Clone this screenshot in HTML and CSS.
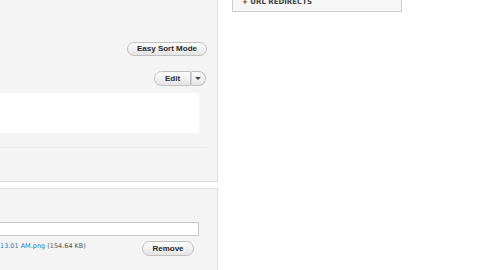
FILE: index.html
```html
<!DOCTYPE html>
<html lang="en">
<head>
    <meta charset="UTF-8">
    <meta name="viewport" content="width=device-width, initial-scale=1.0">
    <title>Edit content</title>
    <link rel="stylesheet" href="styles.css">
</head>
<body>

    <div class="page">
        <div class="main">

            <!-- Field collection panel -->
            <div class="panel panel-fields">
                <div class="toolbar">
                    <button class="btn btn-sort">Easy Sort Mode</button>
                </div>
                <div class="toolbar toolbar-edit">
                    <div class="split">
                        <button class="btn split-main">Edit</button>
                        <button class="btn split-arrow"><span class="caret"></span></button>
                    </div>
                </div>
                <div class="item-box"></div>
                <div class="divider"></div>
            </div>

            <!-- File upload panel -->
            <div class="panel panel-file">
                <input type="text" class="text-field">
                <div class="file-row">
                    <span class="file-name"><a href="#">13.01 AM.png</a> (154.64 KB)</span>
                    <button class="btn btn-remove">Remove</button>
                </div>
            </div>

        </div>

        <div class="sidebar">
            <div class="side-box">
                <span class="side-title">+ URL REDIRECTS</span>
            </div>
        </div>
    </div>

</body>
</html>
```

FILE: styles.css
```css
/* Page layout */
body {
    font-family: "Liberation Sans", Arial, sans-serif;
    background-color: #ffffff;
    margin: 0;
    padding: 0;
    overflow: hidden;
}
.page {
    display: flex;
    align-items: flex-start;
}
.main {
    width: 218px;
}
.sidebar {
    width: 170px;
    margin-left: 14px;
    margin-top: -19px;
}

/* Panels */
.panel {
    background-color: #f4f4f4;
    border-right: 1px solid #dcdcdc;
    box-sizing: border-box;
}
.panel-fields {
    height: 182px;
    border-bottom: 1px solid #dcdcdc;
}
.panel-file {
    margin-top: 6px;
    height: 90px;
    border-top: 1px solid #dcdcdc;
    padding-top: 33px;
}
.toolbar {
    display: flex;
    justify-content: flex-end;
    padding-top: 42px;
    padding-right: 10px;
}
.toolbar-edit {
    padding-top: 15px;
    padding-right: 11px;
}

/* Buttons */
.btn {
    font-family: "Liberation Sans", Arial, sans-serif;
    font-weight: bold;
    font-size: 8px;
    color: #2a2a2a;
    height: 14px;
    padding: 0 10px;
    border: 1px solid #c0c0c0;
    border-radius: 10px;
    background: linear-gradient(#fdfdfd, #e4e4e4);
    cursor: pointer;
    line-height: 12px;
}
.btn:hover {
    background: linear-gradient(#ffffff, #eeeeee);
}
.btn-sort {
    width: 80px;
    padding: 0;
}
.split {
    display: flex;
}
.split-main {
    width: 37px;
    height: 15px;
    border-radius: 10px 0 0 10px;
    padding: 0;
}
.split-arrow {
    width: 15px;
    height: 15px;
    border-left: 1px solid #d0d0d0;
    border-radius: 0 10px 10px 0;
    padding: 0;
    display: flex;
    align-items: center;
    justify-content: center;
}
.caret {
    width: 0;
    height: 0;
    border-left: 3px solid transparent;
    border-right: 3px solid transparent;
    border-top: 3px solid #444;
    margin-right: 2px;
}

/* Field items */
.item-box {
    margin-top: 7px;
    width: 199px;
    height: 40px;
    background-color: #ffffff;
}
.divider {
    margin-top: 14px;
    width: 207px;
    border-top: 1px solid #e8e8e8;
}

/* File field */
.text-field {
    display: block;
    width: 200px;
    height: 14px;
    margin: 0 0 0 -1px;
    padding: 0;
    border: 1px solid #c8c8c8;
    background-color: #ffffff;
    box-sizing: border-box;
}
.file-row {
    display: flex;
    align-items: flex-start;
    margin-top: 5px;
}
.file-name {
    font-family: "DejaVu Sans", Verdana, sans-serif;
    font-size: 6.5px;
    color: #555;
    width: 142px;
    padding-top: 1px;
}
.file-name a {
    color: #2a7ab8;
    text-decoration: none;
}
.btn-remove {
    width: 52px;
    height: 15px;
    padding: 0;
}

/* Sidebar */
.side-box {
    height: 31px;
    border: 1px solid #cccccc;
    background-color: #f6f6f6;
    box-sizing: border-box;
    padding: 8px 0 0 9px;
}
.side-title {
    font-family: "DejaVu Sans", Verdana, sans-serif;
    font-weight: bold;
    font-size: 7px;
    color: #444;
}
```
